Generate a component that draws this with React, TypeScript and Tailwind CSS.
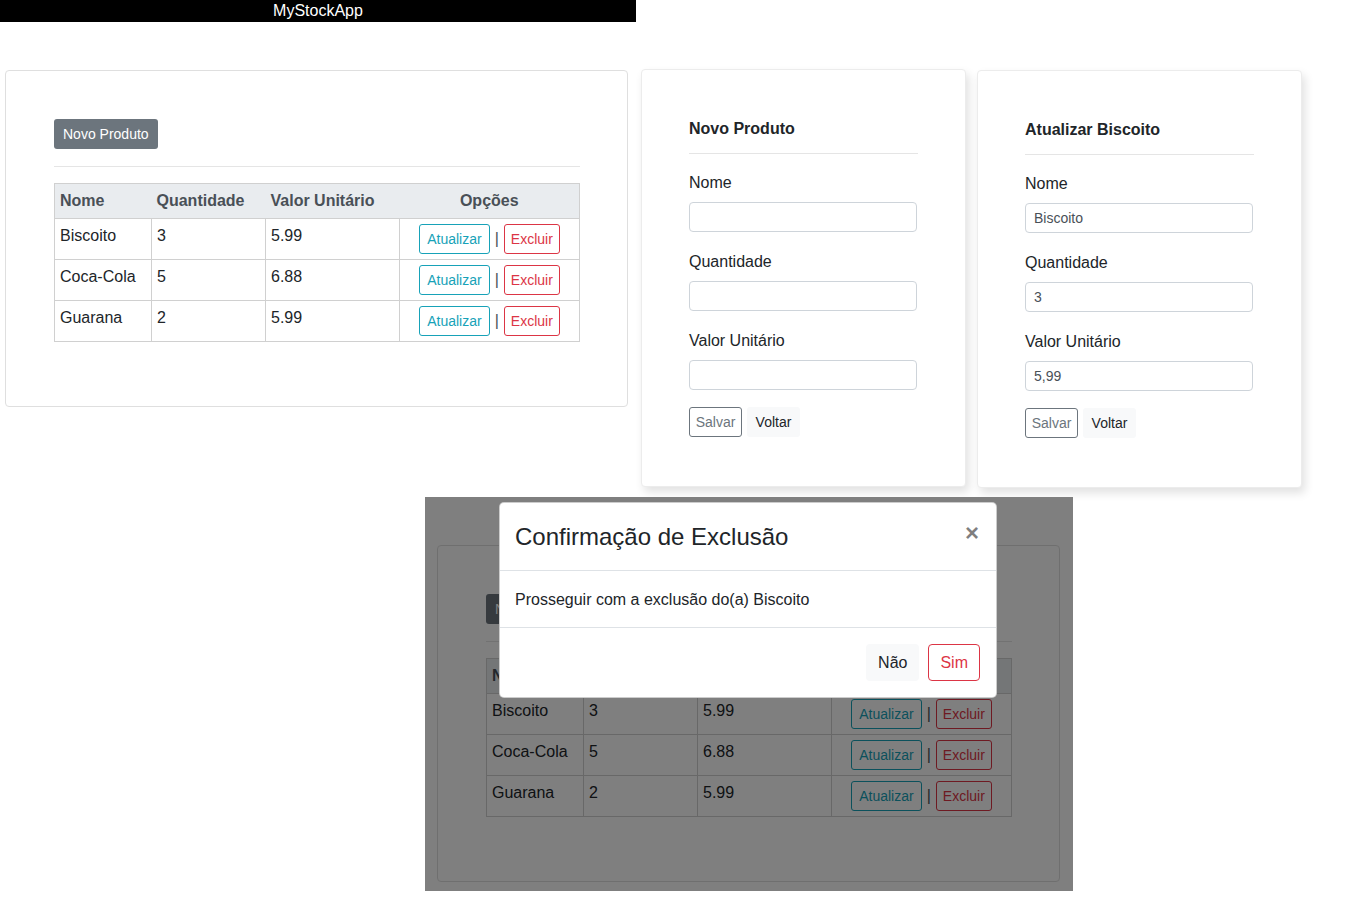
import React from "react";

const rows = [
  { nome: "Biscoito", qtd: "3", valor: "5.99" },
  { nome: "Coca-Cola", qtd: "5", valor: "6.88" },
  { nome: "Guarana", qtd: "2", valor: "5.99" },
];

function ListCard() {
  return (
    <div className="w-[623px] h-[337px] border border-[#dfdfdf] rounded-[4px] bg-white pt-[48px] pl-[48px] pr-[47px]">
      <button className="h-[30px] px-[9px] rounded-[3px] bg-[#6c757d] text-white text-[14px] leading-[30px]">
        Novo Produto
      </button>
      <hr className="mt-[17px] mb-[16px] border-0 border-t border-[#e5e5e5]" />
      <table className="w-[525px] border-collapse border border-[#d0d0d0] text-[16px] text-[#212529] table-fixed">
        <colgroup>
          <col className="w-[97px]" />
          <col className="w-[114px]" />
          <col className="w-[134px]" />
          <col className="w-[180px]" />
        </colgroup>
        <thead>
          <tr className="h-[35px] bg-[#e9ecef] text-[#495057] font-bold">
            <th className="text-left px-[5px]">Nome</th>
            <th className="text-left px-[5px]">Quantidade</th>
            <th className="text-left px-[5px]">Valor Unitário</th>
            <th className="text-center px-[5px]">Opções</th>
          </tr>
        </thead>
        <tbody>
          {rows.map((r) => (
            <tr key={r.nome} className="h-[41px]">
              <td className="border border-[#d0d0d0] align-top px-[5px] pt-[5px] leading-[24px]">{r.nome}</td>
              <td className="border border-[#d0d0d0] align-top px-[5px] pt-[5px] leading-[24px]">{r.qtd}</td>
              <td className="border border-[#d0d0d0] align-top px-[5px] pt-[5px] leading-[24px]">{r.valor}</td>
              <td className="border border-[#d0d0d0] align-middle px-[5px]">
                <div className="flex items-center justify-center gap-[5px] text-[#495057]">
                  <button className="h-[30px] px-[7px] border border-[#17a2b8] rounded-[3px] text-[#17a2b8] text-[14px]">
                    Atualizar
                  </button>
                  <span>|</span>
                  <button className="h-[30px] px-[6px] border border-[#dc3545] rounded-[3px] text-[#dc3545] text-[14px]">
                    Excluir
                  </button>
                </div>
              </td>
            </tr>
          ))}
        </tbody>
      </table>
    </div>
  );
}

function Field({ label, value }: { label: string; value?: string }) {
  return (
    <div>
      <label className="block text-[16px] leading-[24px] text-[#212529]">{label}</label>
      <div className="mt-[7px] h-[30px] w-[228px] border border-[#ced4da] rounded-[4px] bg-white px-[8px] text-[14px] leading-[28px] text-[#495057]">
        {value}
      </div>
    </div>
  );
}

function FormCard({ title, values }: { title: string; values?: string[] }) {
  return (
    <div className="w-[325px] h-[418px] bg-white rounded-[4px] border border-[#ececec] shadow-[3px_5px_10px_rgba(0,0,0,0.12)] pt-[47px] px-[47px]">
      <h6 className="text-[16px] leading-[24px] font-semibold text-[#212529]">{title}</h6>
      <hr className="mt-[12px] mb-[17px] border-0 border-t border-[#e5e5e5]" />
      <div className="flex flex-col gap-[18px]">
        <Field label="Nome" value={values?.[0]} />
        <Field label="Quantidade" value={values?.[1]} />
        <Field label="Valor Unitário" value={values?.[2]} />
      </div>
      <div className="mt-[17px] flex gap-[5px]">
        <button className="h-[30px] w-[53px] border border-[#6c757d] rounded-[3px] text-[#6c757d] text-[14px]">
          Salvar
        </button>
        <button className="h-[30px] w-[53px] bg-[#f8f9fa] rounded-[3px] text-[#212529] text-[14px]">
          Voltar
        </button>
      </div>
    </div>
  );
}

function DeleteModal() {
  return (
    <div className="absolute left-[74px] top-[5px] w-[498px] bg-white rounded-[5px] border border-black/20 text-[#212529]">
      <div className="h-[68px] pl-[15px] pr-[16px] pt-[1px] flex items-center justify-between border-b border-[#dee2e6]">
        <h4 className="text-[24px] leading-[36px] font-medium">Confirmação de Exclusão</h4>
        <button className="mr-[1px] -mt-[9px] text-[24px] leading-none font-bold text-black/50">×</button>
      </div>
      <div className="h-[57px] pl-[15px] pt-[17px] text-[16px] leading-[24px] border-b border-[#dee2e6]">
        Prosseguir com a exclusão do(a) Biscoito
      </div>
      <div className="py-[16px] pr-[16px] flex justify-end gap-[9px]">
        <button className="h-[37px] px-[12px] rounded-[4px] bg-[#f8f9fa] text-[16px] text-[#212529]">Não</button>
        <button className="h-[37px] px-[11px] rounded-[4px] border border-[#dc3545] text-[16px] text-[#dc3545]">Sim</button>
      </div>
    </div>
  );
}

export default function App() {
  return (
    <div className="w-[1345px] h-[909px] bg-white overflow-hidden font-['Liberation_Sans',Arial,sans-serif]">
      <div className="flex">
        <div className="w-[636px]">
          <div className="h-[22px] bg-black text-white text-center text-[16px] leading-[22px]">MyStockApp</div>
          <div className="ml-[5px] mt-[48px]">
            <ListCard />
          </div>
        </div>
        <div className="ml-[5px] mt-[69px]">
          <FormCard title="Novo Produto" />
        </div>
        <div className="ml-[11px] mt-[70px]">
          <FormCard title="Atualizar Biscoito" values={["Biscoito", "3", "5,99"]} />
        </div>
      </div>

      <div className="relative ml-[425px] mt-[9px] w-[648px] h-[394px] overflow-hidden bg-white pl-[12px] pt-[48px]">
        <ListCard />
        <div className="absolute inset-0 bg-black/50" />
        <DeleteModal />
      </div>
    </div>
  );
}
